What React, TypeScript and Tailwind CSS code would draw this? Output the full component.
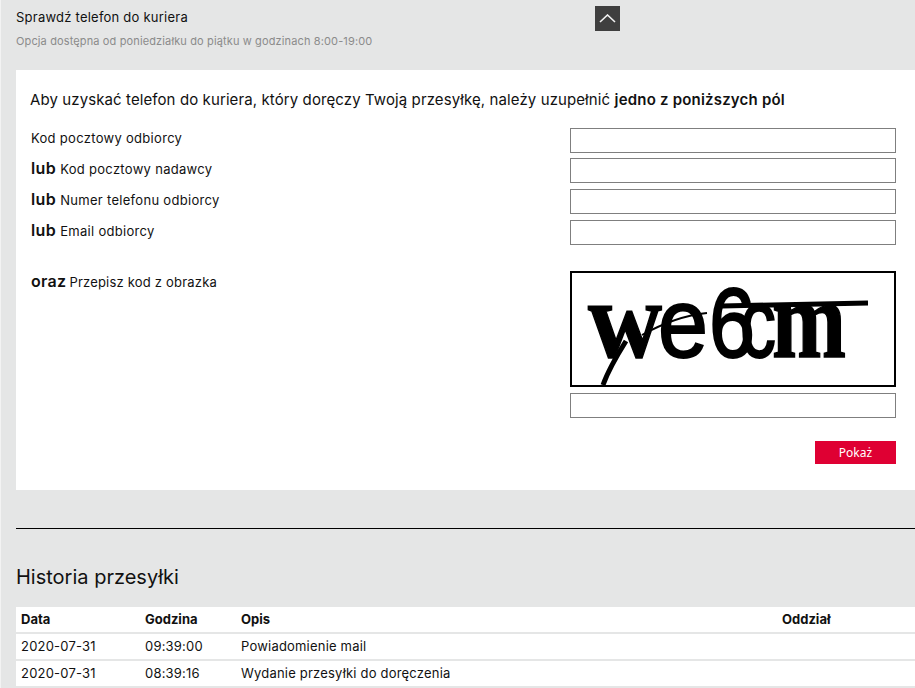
const font = { fontFamily: '"Inter", "Liberation Sans", sans-serif' };

function Row({ lub, label, first }: { lub?: boolean; label: string; first?: boolean }) {
  return (
    <div className={`flex items-center h-[25px] ${first ? "mb-[5px]" : "mb-[6px]"}`}>
      <div className="w-[539px] text-[13px] text-[#111] tracking-[0.3px] leading-[20px] -mt-[5px]">
        {lub && <span className="text-[16px] font-semibold tracking-[0.4px] mr-[4px]">lub</span>}
        {label}
      </div>
      <div className="w-[326px] h-[25px] border border-[#7f7f7f] bg-white" />
    </div>
  );
}

function Captcha() {
  return (
    <div className="w-[326px] h-[116px] border-[2px] border-black bg-white overflow-hidden">
      <svg width="322" height="112" viewBox="0 0 322 112" className="blur-[0.5px]">
        <text x="16" y="84" fontFamily="Liberation Serif" fontSize="110" fontWeight="700" textLength="74" lengthAdjust="spacingAndGlyphs" stroke="#000" strokeWidth="1.5">w</text>
        <text x="86" y="84" fontFamily="Liberation Sans" fontSize="98" textLength="50" lengthAdjust="spacingAndGlyphs" stroke="#000" strokeWidth="2">e</text>
        <text x="137" y="84" fontFamily="Liberation Sans" fontSize="98" textLength="46" lengthAdjust="spacingAndGlyphs" stroke="#000" strokeWidth="2">6</text>
        <text x="168" y="84" fontFamily="Liberation Sans" fontSize="98" textLength="36" lengthAdjust="spacingAndGlyphs" stroke="#000" strokeWidth="2">c</text>
        <text x="200" y="84" fontFamily="Liberation Serif" fontSize="110" fontWeight="700" textLength="74" lengthAdjust="spacingAndGlyphs" stroke="#000" strokeWidth="1.5">m</text>
        <path d="M150 33 L296 30" stroke="#000" strokeWidth="5" fill="none" />
        <path d="M70 62 C95 48 115 42 135 40" stroke="#000" strokeWidth="2" fill="none" />
        <path d="M54 68 C44 84 36 98 31 112" stroke="#000" strokeWidth="5" fill="none" />
      </svg>
    </div>
  );
}

export default function App() {
  const rows = [
    ["2020-07-31", "09:39:00", "Powiadomienie mail"],
    ["2020-07-31", "08:39:16", "Wydanie przesyłki do doręczenia"],
  ];
  return (
    <div className="w-[915px] h-[688px] overflow-hidden bg-[#e5e6e6] border-l border-l-[#f3f3f3] text-[#111]" style={font}>
      <div className="pl-[15px]">
        <div className="flex h-[70px]">
          <div className="w-[579px]">
            <div className="pt-[8px] text-[13px] tracking-[0.23px] leading-[18px]">Sprawdź telefon do kuriera</div>
            <div className="pt-[6px] text-[11px] tracking-[0.13px] leading-[18px] text-[#8b8b8b]">Opcja dostępna od poniedziałku do piątku w godzinach 8:00-19:00</div>
          </div>
          <div className="mt-[6px] w-[25px] h-[25px] bg-[#3f3f3f] flex items-center justify-center">
            <svg width="17" height="9" viewBox="0 0 17 9" fill="none" stroke="#f2f2f2" strokeWidth="1.6"><path d="M1 8 L8.5 1 L16 8" /></svg>
          </div>
        </div>
        <div className="bg-white h-[420px] pl-[15px] pt-[20px]">
          <div className="text-[15px] tracking-[0.1px] leading-[20px] mb-[18px] -ml-px">
            Aby uzyskać telefon do kuriera, który doręczy Twoją przesyłkę, należy uzupełnić <span className="font-semibold tracking-[0.2px]">jedno z poniższych pól</span>
          </div>
          <Row first label="Kod pocztowy odbiorcy" />
          <Row lub label="Kod pocztowy nadawcy" />
          <Row lub label="Numer telefonu odbiorcy" />
          <Row lub label="Email odbiorcy" />
          <div className="flex mt-[26px]">
            <div className="w-[539px] text-[13px] tracking-[0.2px] leading-[20px]">
              <span className="text-[16px] font-semibold tracking-[0.3px] mr-[3px]">oraz</span>Przepisz kod z obrazka
            </div>
            <div className="w-[326px]">
              <Captcha />
              <div className="mt-[6px] h-[25px] border border-[#7f7f7f] bg-white" />
              <div className="flex justify-end mt-[23px]">
                <div className="w-[81px] h-[23px] bg-[#df0033] text-white text-[12px] flex items-center justify-center" style={{ fontFamily: '"Noto Sans", sans-serif' }}>Pokaż</div>
              </div>
            </div>
          </div>
        </div>
        <div className="mt-[38px] h-px bg-black" />
        <h2 className="mt-[35px] text-[20px] leading-[26px] font-normal">Historia przesyłki</h2>
        <div className="mt-[17px] bg-white text-[13px]">
          <div className="flex h-[27px] items-center font-bold border-b-[2px] border-[#e5e6e6]">
            <div className="w-[129px] pl-[5px]">Data</div>
            <div className="w-[96px]">Godzina</div>
            <div className="w-[541px]">Opis</div>
            <div>Oddział</div>
          </div>
          {rows.map((r) => (
            <div key={r[1]} className="flex h-[27px] items-center border-b-[2px] border-[#e5e6e6] tracking-[0.2px]">
              <div className="w-[129px] pl-[5px]">{r[0]}</div>
              <div className="w-[96px]">{r[1]}</div>
              <div className="w-[541px]">{r[2]}</div>
            </div>
          ))}
        </div>
      </div>
    </div>
  );
}
